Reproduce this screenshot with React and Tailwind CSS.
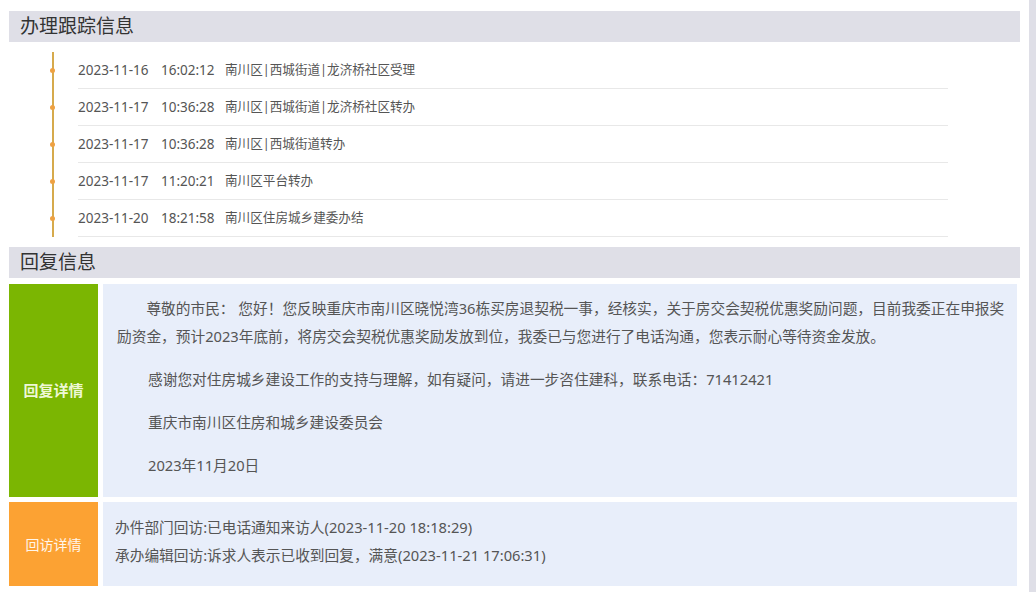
import React from "react";

const tracks = [
  { date: "2023-11-16", time: "16:02:12", text: "南川区|西城街道|龙济桥社区受理" },
  { date: "2023-11-17", time: "10:36:28", text: "南川区|西城街道|龙济桥社区转办" },
  { date: "2023-11-17", time: "10:36:28", text: "南川区|西城街道转办" },
  { date: "2023-11-17", time: "11:20:21", text: "南川区平台转办" },
  { date: "2023-11-20", time: "18:21:58", text: "南川区住房城乡建委办结" },
];

function SectionTitle({ children }) {
  return (
    <div className="h-[31px] bg-[#dfdfe7] pl-[11px] flex items-center text-[19px] text-[#333]">
      {children}
    </div>
  );
}

export default function App() {
  return (
    <div
      className="flex w-[1036px] h-[592px] bg-white overflow-hidden"
      style={{ fontFamily: '"Noto Sans", "Noto Sans CJK SC", sans-serif' }}
    >
      <div className="w-[1029px] pl-[9px] pr-[9px] pt-[11px]">
        <SectionTitle>办理跟踪信息</SectionTitle>

        {/* timeline */}
        <ul className="mt-[10px] ml-[43px] border-l-[2px] border-[#d6aa4c] pl-[24px] w-[896px]">
          {tracks.map((t, i) => (
            <li
              key={i}
              className="relative h-[37px] flex items-center border-b border-[#e8e8e8] text-[13.5px] text-[#555]"
            >
              <span className="absolute left-[-28.5px] top-[16px] w-[5px] h-[5px] rounded-full bg-[#eea142]" />
              <span className="w-[83px]">{t.date}</span>
              <span className="w-[64px]">{t.time}</span>
              <span className="text-[12.6px]">{t.text}</span>
            </li>
          ))}
        </ul>

        <div className="mt-[10px]">
          <SectionTitle>回复信息</SectionTitle>
        </div>

        <div className="mt-[6px] flex gap-[5px] pr-[3px]">
          <div className="w-[89px] shrink-0 bg-[#7bb602] flex items-center justify-center text-[15px] font-bold text-[#eef8d6]">
            回复详情
          </div>
          <div className="flex-1 bg-[#e8eefa] pt-[10px] pl-[14px] pr-[4px] text-[14.7px] leading-[28px] text-[#555]">
            <p className="indent-[2em] mb-[15px]">
              尊敬的市民： 您好！您反映重庆市南川区晓悦湾36栋买房退契税一事，经核实，关于房交会契税优惠奖励问题，目前我委正在申报奖励资金，预计2023年底前，将房交会契税优惠奖励发放到位，我委已与您进行了电话沟通，您表示耐心等待资金发放。
            </p>
            <p className="pl-[31px] mb-[15px]">
              感谢您对住房城乡建设工作的支持与理解，如有疑问，请进一步咨住建科，联系电话：71412421
            </p>
            <p className="pl-[31px] mb-[15px]">重庆市南川区住房和城乡建设委员会</p>
            <p className="pl-[31px] mb-[18px]">2023年11月20日</p>
          </div>
        </div>

        <div className="mt-[5px] flex gap-[5px] pr-[3px]">
          <div className="w-[89px] shrink-0 bg-[#fca233] flex items-center justify-center text-[14px] text-[#fff6ea]">
            回访详情
          </div>
          <div className="flex-1 bg-[#e8eefa] pt-[11px] pb-[17px] pl-[12px] text-[14.7px] leading-[28px] text-[#555]">
            <p>办件部门回访:已电话通知来访人(2023-11-20 18:18:29)</p>
            <p>承办编辑回访:诉求人表示已收到回复，满意(2023-11-21 17:06:31)</p>
          </div>
        </div>
      </div>
      <div className="w-[7px] bg-[#dfdfe7]" />
    </div>
  );
}
